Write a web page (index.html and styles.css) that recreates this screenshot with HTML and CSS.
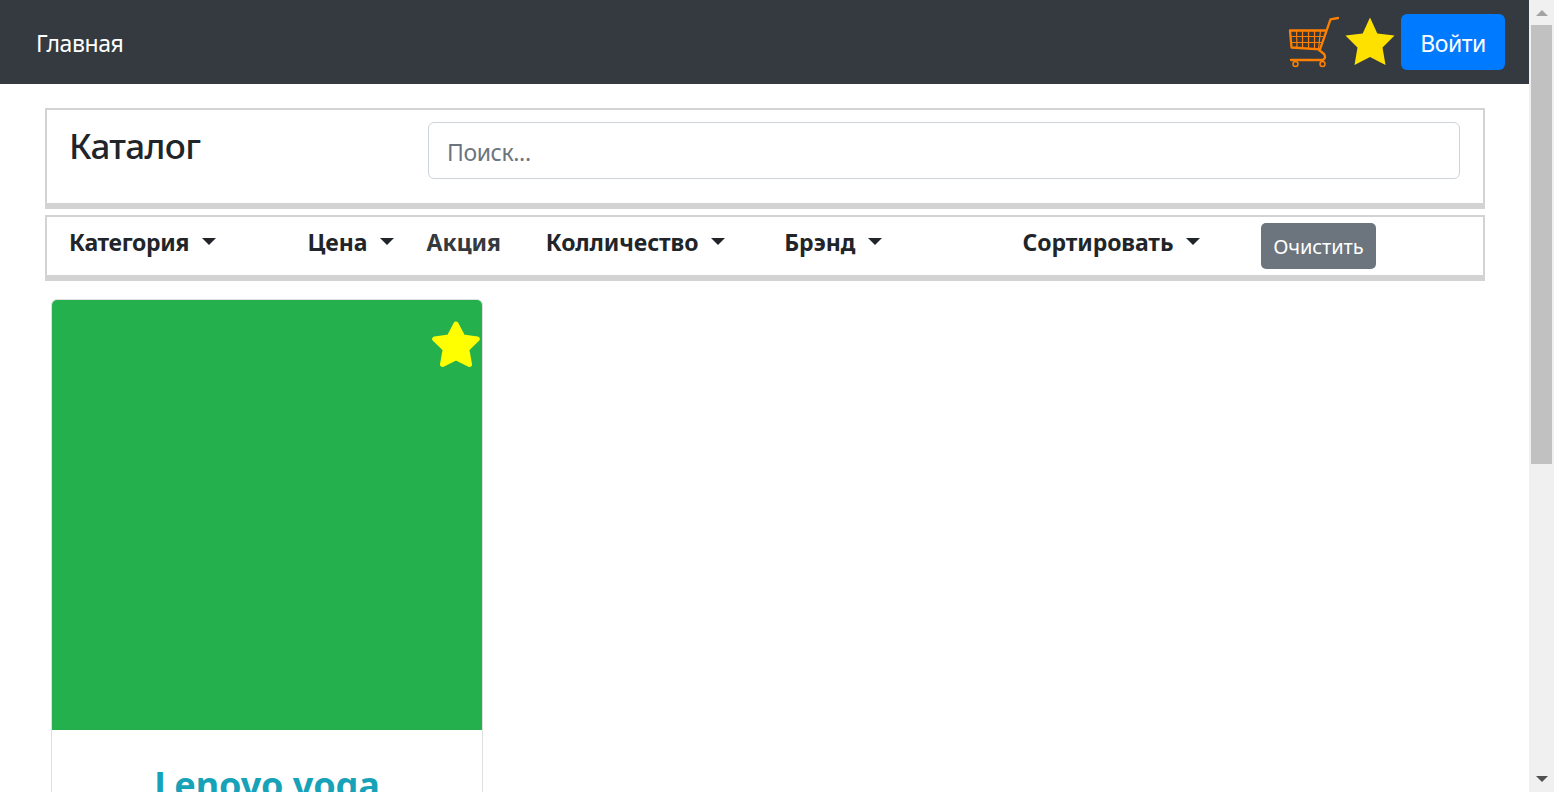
FILE: index.html
```html
<!DOCTYPE html>
<html lang="ru">
<head>
<meta charset="utf-8">
<title>Каталог</title>
<link rel="stylesheet" href="styles.css">
</head>
<body>
<div class="page">
  <nav class="navbar">
    <a class="nav-link"><span>Главная</span></a>
    <div class="nav-actions">
      <svg class="cart" viewBox="0 0 52 52" fill="none" stroke="#ff8000">
        <path d="M50 2 L42.500 3.300 L32 33.300 L3.500 31.500 L2 14.500 H38" stroke-width="2.300" stroke-linejoin="round" stroke-linecap="round"/>
        <path d="M31 34 L36 38 Q38.500 41.500 35 44 H3" stroke-width="2.300" stroke-linejoin="round" stroke-linecap="round"/>
        <path d="M2.500 20.500H35.500M3 26.500H33.500M8.500 14.500L9 32M14.500 14.500V32M20.500 14.500V32.500M26.500 14.500V33M32.500 14.500L30.500 33" stroke-width="1.200"/>
        <circle cx="7.500" cy="48" r="2.500" stroke-width="1.500"/>
        <circle cx="34.500" cy="48" r="2.500" stroke-width="1.500"/>
      </svg>
      <svg class="fav" viewBox="0 0 50 50"><path fill="#ffe100" d="M25 .5L32.300 16.500L49.500 18.500L37.500 30.500L40.500 48L25 40L9.500 48L12.500 30.500L.5 18.500L17.700 16.500Z"/></svg>
      <button class="login"><span>Войти</span></button>
    </div>
  </nav>
  <main class="content">
    <section class="panel heading">
      <h1 class="title"><span>Каталог</span></h1>
      <input class="search" type="text" placeholder="Поиск...">
    </section>
    <section class="panel filters">
      <div class="filter wide"><span class="category">Категория</span><i class="caret"></i></div>
      <div class="filter"><span class="price">Цена</span><i class="caret"></i></div>
      <div class="filter sale"><span>Акция</span></div>
      <div class="filter wide"><span class="amount">Колличество</span><i class="caret"></i></div>
      <div class="filter wide"><span class="brand">Брэнд</span><i class="caret"></i></div>
      <div class="filter wide"><span class="sort">Сортировать</span><i class="caret"></i></div>
      <button class="clear"><span>Очистить</span></button>
    </section>
    <article class="card">
      <div class="photo">
        <svg class="card-star" viewBox="0 0 48 47"><path fill="#ff0" stroke="#ff0" stroke-width="5" stroke-linejoin="round" d="M24 3L30.800 16L45.300 18L34.800 28.300L37.500 43.500L24 36.800L10.500 43.500L13.200 28.300L2.700 18L17.200 16Z"/></svg>
      </div>
      <h2 class="name"><span>Lenovo yoga</span></h2>
    </article>
  </main>
</div>
<div class="scrollbar">
  <i class="arrow up"></i>
  <div class="thumb"></div>
  <i class="arrow down"></i>
</div>
</body>
</html>
```
FILE: styles.css
```css
* { box-sizing: border-box; }
body {
  margin: 0;
  height: 792px;
  display: flex;
  overflow: hidden;
  background: #fff;
  color: #212529;
  font: 24px/36px "Noto Sans", "Open Sans", sans-serif;
}
button, input { font: inherit; margin: 0; }
.page { width: 1529px; height: 792px; overflow: hidden; }
.navbar {
  height: 84px;
  padding: 0 24px 0 36px;
  display: flex;
  align-items: center;
  justify-content: space-between;
  background: #343a40;
}
.nav-link { color: #fff; font-size: 23px; letter-spacing: -0.45px; padding-top: 1px; }
.nav-actions { display: flex; align-items: center; }
.cart { width: 52px; height: 52px; margin-right: 5px; }
.fav { width: 50px; height: 50px; margin-right: 6px; }
.login {
  width: 104px;
  height: 56px;
  padding: 2px 0 0;
  border: 0;
  border-radius: 6px;
  background: #007bff;
  color: #fff;
  font-size: 23px;
  letter-spacing: -0.5px;
}
.content { padding: 24px 44px 0 45px; }
.panel { border: 2px solid #d3d3d3; border-bottom-width: 6px; }
.heading {
  height: 101px;
  padding: 12px 23px 0 22px;
  display: flex;
  justify-content: space-between;
}
.title {
  margin: 2px 0 0;
  font-size: 35px;
  line-height: 44px;
  font-weight: 500;
  letter-spacing: -0.7px;
}
.search {
  width: 1032px;
  height: 57px;
  padding: 3px 18px 0;
  border: 1px solid #ced4da;
  border-radius: 6px;
  font-size: 23px;
  letter-spacing: -0.4px;
  color: #495057;
}
.search::placeholder { color: #6c757d; opacity: 1; }
.filters {
  height: 66px;
  margin-top: 6px;
  padding: 6px 0 0 22px;
  display: grid;
  grid-template-columns: repeat(12, 119.2px);
}
.filter { display: flex; height: 40px; padding-top: 1px; font-size: 23px; font-weight: 700; }
.wide { grid-column: span 2; }
.category { letter-spacing: -0.33px; }
.amount, .sort { letter-spacing: -0.09px; }
.sale { color: #343a40; }
.caret {
  margin: 14px 0 0 13px;
  width: 0;
  height: 0;
  border: 7px solid transparent;
  border-top-color: #212529;
  border-bottom: 0;
}
.clear {
  width: 115px;
  height: 46px;
  padding: 1px 0 0;
  border: 0;
  border-radius: 5px;
  background: #6c757d;
  color: #fff;
  font-size: 20px;
  line-height: 30px;
  letter-spacing: -0.1px;
}
.card {
  width: 432px;
  height: 700px;
  margin: 18px 0 0 6px;
  border: 1px solid #dfdfdf;
  border-radius: 6px;
  overflow: hidden;
}
.photo {
  height: 430px;
  padding: 21px 2px 0 0;
  display: flex;
  justify-content: flex-end;
  background: #24b14d;
}
.card-star { width: 48px; height: 47px; }
.name {
  margin: 33px 0 0;
  text-align: center;
  font-size: 36px;
  line-height: 44px;
  letter-spacing: -0.1px;
  color: #17a2b8;
}
.scrollbar {
  width: 25px;
  height: 792px;
  padding: 10px 2px 10px;
  display: flex;
  flex-direction: column;
  align-items: center;
  background: #f0f0f0;
}
.thumb { width: 21px; height: 439px; margin: 9px 0 auto; background: #c1c1c1; }
.arrow { width: 0; height: 0; border: 6px solid transparent; }
.up { border-top: 0; border-bottom-color: #a3a3a3; }
.down { border-bottom: 0; border-top-color: #505050; }
```
